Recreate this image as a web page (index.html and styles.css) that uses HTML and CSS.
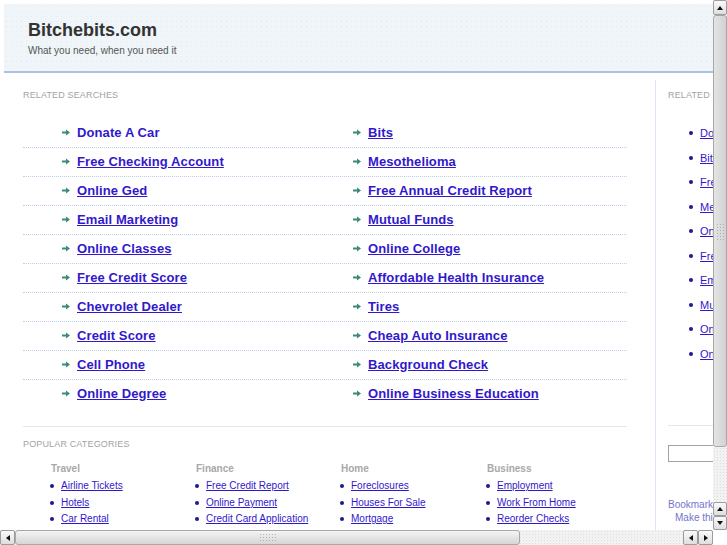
FILE: index.html
```html
<!DOCTYPE html>
<html>
<head>
<meta charset="utf-8">
<title>Bitchebits.com</title>
<link rel="stylesheet" href="styles.css">
</head>
<body>
<div class="window">
  <div class="viewport">
    <div class="page">
      <header class="masthead">
        <h1 class="site-title">Bitchebits.com</h1>
        <p class="tagline">What you need, when you need it</p>
      </header>
      <div class="layout">
        <main class="main">
          <h2 class="section-label">Related Searches</h2>
          <ul class="searches">
            <li class="search-row">
              <span class="cell"><svg class="arrow" viewBox="0 0 8 7"><path d="M0 2.5h4.5v2H0z M4 0.5 L8 3.5 L4 6.5z"/></svg><a class="search-link plain" href="#">Donate A Car</a></span>
              <span class="cell"><svg class="arrow" viewBox="0 0 8 7"><path d="M0 2.5h4.5v2H0z M4 0.5 L8 3.5 L4 6.5z"/></svg><a class="search-link" href="#">Bits</a></span>
            </li>
            <li class="search-row">
              <span class="cell"><svg class="arrow" viewBox="0 0 8 7"><path d="M0 2.5h4.5v2H0z M4 0.5 L8 3.5 L4 6.5z"/></svg><a class="search-link" href="#">Free Checking Account</a></span>
              <span class="cell"><svg class="arrow" viewBox="0 0 8 7"><path d="M0 2.5h4.5v2H0z M4 0.5 L8 3.5 L4 6.5z"/></svg><a class="search-link" href="#">Mesothelioma</a></span>
            </li>
            <li class="search-row">
              <span class="cell"><svg class="arrow" viewBox="0 0 8 7"><path d="M0 2.5h4.5v2H0z M4 0.5 L8 3.5 L4 6.5z"/></svg><a class="search-link" href="#">Online Ged</a></span>
              <span class="cell"><svg class="arrow" viewBox="0 0 8 7"><path d="M0 2.5h4.5v2H0z M4 0.5 L8 3.5 L4 6.5z"/></svg><a class="search-link" href="#">Free Annual Credit Report</a></span>
            </li>
            <li class="search-row">
              <span class="cell"><svg class="arrow" viewBox="0 0 8 7"><path d="M0 2.5h4.5v2H0z M4 0.5 L8 3.5 L4 6.5z"/></svg><a class="search-link" href="#">Email Marketing</a></span>
              <span class="cell"><svg class="arrow" viewBox="0 0 8 7"><path d="M0 2.5h4.5v2H0z M4 0.5 L8 3.5 L4 6.5z"/></svg><a class="search-link" href="#">Mutual Funds</a></span>
            </li>
            <li class="search-row">
              <span class="cell"><svg class="arrow" viewBox="0 0 8 7"><path d="M0 2.5h4.5v2H0z M4 0.5 L8 3.5 L4 6.5z"/></svg><a class="search-link" href="#">Online Classes</a></span>
              <span class="cell"><svg class="arrow" viewBox="0 0 8 7"><path d="M0 2.5h4.5v2H0z M4 0.5 L8 3.5 L4 6.5z"/></svg><a class="search-link" href="#">Online College</a></span>
            </li>
            <li class="search-row">
              <span class="cell"><svg class="arrow" viewBox="0 0 8 7"><path d="M0 2.5h4.5v2H0z M4 0.5 L8 3.5 L4 6.5z"/></svg><a class="search-link" href="#">Free Credit Score</a></span>
              <span class="cell"><svg class="arrow" viewBox="0 0 8 7"><path d="M0 2.5h4.5v2H0z M4 0.5 L8 3.5 L4 6.5z"/></svg><a class="search-link" href="#">Affordable Health Insurance</a></span>
            </li>
            <li class="search-row">
              <span class="cell"><svg class="arrow" viewBox="0 0 8 7"><path d="M0 2.5h4.5v2H0z M4 0.5 L8 3.5 L4 6.5z"/></svg><a class="search-link" href="#">Chevrolet Dealer</a></span>
              <span class="cell"><svg class="arrow" viewBox="0 0 8 7"><path d="M0 2.5h4.5v2H0z M4 0.5 L8 3.5 L4 6.5z"/></svg><a class="search-link" href="#">Tires</a></span>
            </li>
            <li class="search-row">
              <span class="cell"><svg class="arrow" viewBox="0 0 8 7"><path d="M0 2.5h4.5v2H0z M4 0.5 L8 3.5 L4 6.5z"/></svg><a class="search-link" href="#">Credit Score</a></span>
              <span class="cell"><svg class="arrow" viewBox="0 0 8 7"><path d="M0 2.5h4.5v2H0z M4 0.5 L8 3.5 L4 6.5z"/></svg><a class="search-link" href="#">Cheap Auto Insurance</a></span>
            </li>
            <li class="search-row">
              <span class="cell"><svg class="arrow" viewBox="0 0 8 7"><path d="M0 2.5h4.5v2H0z M4 0.5 L8 3.5 L4 6.5z"/></svg><a class="search-link" href="#">Cell Phone</a></span>
              <span class="cell"><svg class="arrow" viewBox="0 0 8 7"><path d="M0 2.5h4.5v2H0z M4 0.5 L8 3.5 L4 6.5z"/></svg><a class="search-link" href="#">Background Check</a></span>
            </li>
            <li class="search-row">
              <span class="cell"><svg class="arrow" viewBox="0 0 8 7"><path d="M0 2.5h4.5v2H0z M4 0.5 L8 3.5 L4 6.5z"/></svg><a class="search-link" href="#">Online Degree</a></span>
              <span class="cell"><svg class="arrow" viewBox="0 0 8 7"><path d="M0 2.5h4.5v2H0z M4 0.5 L8 3.5 L4 6.5z"/></svg><a class="search-link" href="#">Online Business Education</a></span>
            </li>
          </ul>

          <section class="popular">
            <h2 class="section-label">Popular Categories</h2>
            <div class="cats">
              <div class="cat">
                <h3 class="cat-title">Travel</h3>
                <ul class="cat-list">
                  <li><a href="#">Airline Tickets</a></li>
                  <li><a href="#">Hotels</a></li>
                  <li><a href="#">Car Rental</a></li>
                </ul>
              </div>
              <div class="cat">
                <h3 class="cat-title">Finance</h3>
                <ul class="cat-list">
                  <li><a href="#">Free Credit Report</a></li>
                  <li><a href="#">Online Payment</a></li>
                  <li><a href="#">Credit Card Application</a></li>
                </ul>
              </div>
              <div class="cat">
                <h3 class="cat-title">Home</h3>
                <ul class="cat-list">
                  <li><a href="#">Foreclosures</a></li>
                  <li><a href="#">Houses For Sale</a></li>
                  <li><a href="#">Mortgage</a></li>
                </ul>
              </div>
              <div class="cat">
                <h3 class="cat-title">Business</h3>
                <ul class="cat-list">
                  <li><a href="#">Employment</a></li>
                  <li><a href="#">Work From Home</a></li>
                  <li><a href="#">Reorder Checks</a></li>
                </ul>
              </div>
            </div>
          </section>
        </main>

        <aside class="sidebar">
          <h2 class="section-label">Related Searches</h2>
          <ul class="side-list">
            <li><a href="#">Donate A Car</a></li>
            <li><a href="#">Bits</a></li>
            <li><a href="#">Free Checking Account</a></li>
            <li><a href="#">Mesothelioma</a></li>
            <li><a href="#">Online Ged</a></li>
            <li><a href="#">Free Annual Credit Report</a></li>
            <li><a href="#">Email Marketing</a></li>
            <li><a href="#">Mutual Funds</a></li>
            <li><a href="#">Online Classes</a></li>
            <li><a href="#">Online College</a></li>
          </ul>
          <div class="side-rule"></div>
          <form class="side-search"><input class="side-input" type="text"></form>
          <p class="bookmark">Bookmark this page</p>
          <p class="bookmark indent">Make this your homepage</p>
        </aside>
      </div>
    </div>
  </div>

  <div class="vscroll">
    <div class="sb-btn up"></div>
    <div class="v-thumb"><span class="grip v"></span></div>
    <div class="sb-track"></div>
    <div class="sb-btn up small"></div>
    <div class="sb-btn down small"></div>
  </div>
  <div class="hscroll">
    <div class="sb-btn left"></div>
    <div class="h-thumb"><span class="grip h"></span></div>
    <div class="sb-track"></div>
    <div class="sb-btn left"></div>
    <div class="sb-btn right"></div>
  </div>
  <div class="corner"></div>
</div>
</body>
</html>
```

FILE: styles.css
```css
* { box-sizing: border-box; }

html, body {
  margin: 0;
  padding: 0;
  overflow: hidden;
  background: #ffffff;
}

body {
  font-family: "Liberation Sans", Arial, sans-serif;
}

.window {
  display: grid;
  grid-template-columns: 713px 14px;
  grid-template-rows: 530px 15px;
  width: 727px;
  height: 545px;
}

.viewport {
  overflow: hidden;
}

.page {
  width: 1000px;
  padding: 4px 0 0 4px;
}

/* Header */
.masthead {
  height: 69px;
  padding: 15px 0 0 24px;
  background-color: #eff5f8;
  background-image: radial-gradient(circle, #e3ebef 0.6px, transparent 0.8px);
  background-size: 5px 5px;
  border-bottom: 2px solid #a9c1e5;
}

.site-title {
  margin: 0;
  font-size: 18px;
  line-height: 22px;
  font-weight: bold;
  color: #333333;
}

.tagline {
  margin: 3px 0 0;
  font-size: 10px;
  line-height: 14px;
  color: #555555;
}

/* Layout */
.layout {
  display: flex;
  align-items: flex-start;
}

.main {
  width: 604px;
  margin-left: 19px;
  padding-top: 17px;
}

.section-label {
  margin: 0;
  font-size: 9px;
  line-height: 11px;
  font-weight: normal;
  text-transform: uppercase;
  letter-spacing: 0.15px;
  color: #a3a3a3;
}

/* Related searches grid */
.searches {
  list-style: none;
  margin: 18px 0 0;
  padding: 0;
}

.search-row {
  display: flex;
  align-items: center;
  height: 29px;
  padding-bottom: 1px;
  border-bottom: 1px dotted #bcd0ea;
}

.search-row:last-child {
  border-bottom-color: transparent;
}

.cell {
  display: flex;
  align-items: center;
  gap: 7px;
}

.cell:first-child {
  width: 330px;
  padding-left: 39px;
}

.arrow {
  width: 8px;
  height: 7px;
  flex: none;
  fill: #3b8a7b;
}

.search-link {
  font-size: 13px;
  line-height: 16px;
  font-weight: bold;
  letter-spacing: 0.1px;
  color: #3118cc;
  text-decoration: underline;
}

.search-link.plain {
  text-decoration: none;
}

/* Popular categories */
.popular {
  margin-top: 17px;
  padding-top: 12px;
  border-top: 1px solid #dfe8f1;
}

.cats {
  display: grid;
  grid-template-columns: 145px 145px 146px 146px;
  margin-top: 13px;
  padding-left: 27px;
}

.cat-title {
  margin: 0 0 3px;
  padding-left: 1px;
  font-size: 10px;
  line-height: 12px;
  font-weight: bold;
  color: #a8a8a8;
}

.cat-list {
  list-style: none;
  margin: 0;
  padding: 0;
}

.cat-list li {
  display: flex;
  align-items: center;
  gap: 7px;
  font-size: 10px;
  line-height: 16.5px;
}

.cat-list li::before {
  content: "";
  width: 4px;
  height: 4px;
  border-radius: 50%;
  background: #1c1890;
  flex: none;
}

.cat-list a {
  color: #3118cc;
  text-decoration: underline;
}

/* Sidebar */
.sidebar {
  width: 260px;
  min-height: 470px;
  margin-left: 28px;
  margin-top: 7px;
  padding: 10px 0 0 12px;
  border-left: 1px solid #dbe4f4;
}

.side-list {
  list-style: none;
  margin: 19.75px 0 0;
  padding: 0 0 0 21px;
}

.side-list li {
  display: flex;
  align-items: center;
  gap: 7px;
  height: 24.5px;
  font-size: 11px;
}

.side-list li::before {
  content: "";
  width: 4px;
  height: 4px;
  border-radius: 50%;
  background: #1c1890;
  flex: none;
}

.side-list a {
  color: #3118cc;
  text-decoration: underline;
  white-space: nowrap;
}

.side-rule {
  margin-top: 59px;
  border-top: 1px solid #dfe8f1;
}

.side-search {
  margin: 19px 0 0;
}

.side-input {
  display: block;
  width: 150px;
  height: 17px;
  margin: 0;
  border: 1px solid #a2a2a2;
  background: #fff;
}

.bookmark {
  margin: 0;
  font-size: 10px;
  line-height: 13px;
  color: #7474cc;
  white-space: nowrap;
}

.side-search + .bookmark {
  margin-top: 36px;
}

.bookmark.indent {
  padding-left: 7px;
}

/* Scrollbars */
.vscroll {
  display: flex;
  flex-direction: column;
  background-color: #f2f2f2;
  background-image: radial-gradient(circle, #dedede 0.6px, transparent 0.8px);
  background-size: 3px 3px;
}

.hscroll {
  display: flex;
  background-color: #f2f2f2;
  background-image: radial-gradient(circle, #dedede 0.6px, transparent 0.8px);
  background-size: 3px 3px;
}

.corner {
  background: #ffffff;
}

.sb-track {
  flex: 1;
}

.sb-btn {
  flex: none;
  display: flex;
  align-items: center;
  justify-content: center;
  width: 14px;
  height: 15px;
  background: linear-gradient(#fafafa, #dedede);
  border: 1px solid #9c9c9c;
  border-radius: 2px;
}

.sb-btn.small {
  height: 14px;
}

.hscroll .sb-btn {
  width: 15px;
  height: 15px;
}

.sb-btn::before {
  content: "";
  width: 0;
  height: 0;
}

.sb-btn.up::before {
  border-left: 3px solid transparent;
  border-right: 3px solid transparent;
  border-bottom: 4px solid #111;
}

.sb-btn.down::before {
  border-left: 3px solid transparent;
  border-right: 3px solid transparent;
  border-top: 4px solid #111;
}

.sb-btn.left::before {
  border-top: 3px solid transparent;
  border-bottom: 3px solid transparent;
  border-right: 4px solid #111;
}

.sb-btn.right::before {
  border-top: 3px solid transparent;
  border-bottom: 3px solid transparent;
  border-left: 4px solid #111;
}

.v-thumb {
  flex: none;
  height: 432px;
  display: flex;
  align-items: center;
  justify-content: center;
  background: linear-gradient(90deg, #e4e4e4, #d2d2d2);
  border: 1px solid #a8a8a8;
  border-radius: 3px;
}

.h-thumb {
  flex: none;
  width: 505px;
  display: flex;
  align-items: center;
  justify-content: center;
  background: linear-gradient(#f4f4f4, #d6d6d6);
  border: 1px solid #a8a8a8;
  border-radius: 3px;
}

.grip {
  display: block;
  background-image: radial-gradient(circle, #b0b0b0 0.7px, transparent 0.9px);
  background-size: 3px 3px;
}

.grip.v {
  width: 9px;
  height: 17px;
}

.grip.h {
  width: 17px;
  height: 9px;
}
```
